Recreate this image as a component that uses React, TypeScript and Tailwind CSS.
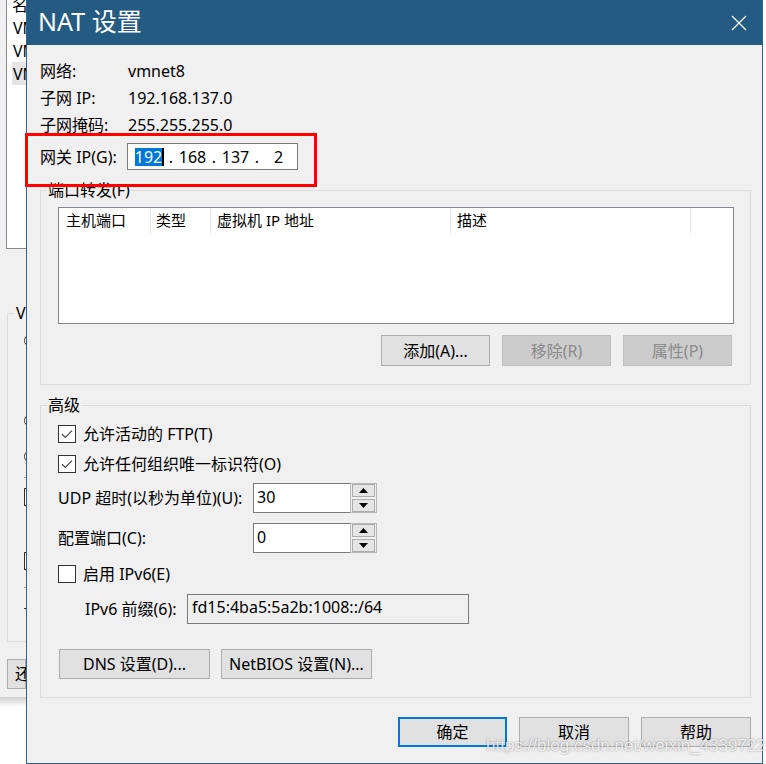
import React from "react";

const FONT = "font-['Noto_Sans','Noto_Sans_CJK_SC',sans-serif]";

type BtnProps = {
  label: string;
  className?: string;
  disabled?: boolean;
  primary?: boolean;
};

const Button = ({ label, className = "", disabled, primary }: BtnProps) => {
  const tone = disabled
    ? "border bg-[#cccccc] border-[#bfbfbf] text-[#8a8a8a]"
    : primary
    ? "border-2 bg-[#e1e1e1] border-[#0078d7] text-black"
    : "border bg-[#e1e1e1] border-[#adadad] text-black";
  return (
    <div
      className={`flex items-center justify-center text-[16px] leading-none ${tone} ${className}`}>
      {label}
    </div>
  );
};

const Check = ({ checked }: { checked?: boolean }) => (
  <div className="w-[18px] h-[18px] shrink-0 border border-[#333333] bg-white flex items-center justify-center">
    {checked && (
      <svg width="12" height="10" viewBox="0 0 12 10">
        <path d="M1 5.2 L4.4 8.4 L11 1.6" fill="none" stroke="#4a4a4a" strokeWidth="1.3" />
      </svg>
    )}
  </div>
);

const Arrow = ({ up }: { up?: boolean }) => (
  <div className="h-[13px] bg-[#e5e5e5] border border-[#acacac] flex items-center justify-center">
    <svg width="9" height="5" viewBox="0 0 9 5">
      <path d={up ? "M0 5 L4.5 0 L9 5Z" : "M0 0 L4.5 5 L9 0Z"} fill="#000" />
    </svg>
  </div>
);

const Spin = ({ value }: { value: string }) => (
  <div className="flex w-[124px] h-[30px] shrink-0">
    <div className="flex-1 bg-white border border-[#7a7a7a] border-r-0 pl-[3px] pb-[3px] flex items-center text-[16px]">
      {value}
    </div>
    <div className="w-[27px] border border-[#b9b9b9] bg-[#f0f0f0] flex flex-col justify-between px-[1px]">
      <Arrow up />
      <Arrow />
    </div>
  </div>
);

// Part of the window that sits behind the dialog
const BackWindow = () => (
  <div className="w-[26px] shrink-0 flex flex-col overflow-hidden text-[16px]">
    <div className="h-[697px] bg-[#f0f0f0] flex flex-col">
      <div className="ml-[6px] h-[249px] bg-white border-l border-b border-[#828790] flex flex-col overflow-hidden">
        <div className="mt-[-7px] h-[23px] pl-[5px] flex items-center whitespace-nowrap">名称</div>
        <div className="h-[23px] pl-[6px] flex items-center whitespace-nowrap">VMnet0</div>
        <div className="h-[23px] pl-[6px] flex items-center whitespace-nowrap">VMnet1</div>
        <div className="h-[23px] ml-[5px] pl-[1px] bg-[#e5e5e5] flex items-center whitespace-nowrap">VMnet8</div>
      </div>
      <fieldset className="ml-[7px] mt-[54px] h-[339px] border border-r-0 border-[#dcdcdc] pl-[16px] flex flex-col">
        <legend className="ml-[-9px] px-[1px] h-[20px] leading-[20px] whitespace-nowrap">VMnet 信息</legend>
        <div className="mt-[11px] w-[13px] h-[13px] rounded-full border border-[#333333] bg-white" />
        <div className="mt-[67px] w-[13px] h-[13px] rounded-full border border-[#333333] bg-white" />
        <div className="mt-[23px] w-[13px] h-[13px] rounded-full border border-[#333333] bg-white" />
        <div className="mt-[14px] h-[1px] w-[10px] bg-[#a0a0a0]" />
        <div className="mt-[10px] w-[18px] h-[18px] border border-[#333333] bg-white" />
        <div className="mt-[46px] w-[18px] h-[18px] border border-[#333333] bg-white" />
        <div className="mt-[17px] h-[1px] w-[10px] bg-[#a0a0a0]" />
        <div className="mt-[20px] h-[1px] w-[4px] bg-[#333333]" />
      </fieldset>
      <div className="ml-[7px] mt-[17px] h-[30px] border border-[#adadad] bg-[#e1e1e1] pl-[7px] flex items-center whitespace-nowrap">
        还原默认设置(R)
      </div>
    </div>
    <div className="h-[10px] bg-linear-to-b from-[#cfcfcf] to-white" />
  </div>
);

const InfoRow = ({ label, value }: { label: string; value: string }) => (
  <div className="h-[27px] flex items-center">
    <div className="w-[88px]">{label}</div>
    <div>{value}</div>
  </div>
);

const Octet = ({ children }: { children: React.ReactNode }) => (
  <div className="w-[35px] flex items-center justify-center">{children}</div>
);

const Dot = () => <div className="w-[8px] text-center">.</div>;

const columns = [
  { title: "主机端口", w: "w-[92px] pl-[7px]" },
  { title: "类型", w: "w-[60px] pl-[5px]" },
  { title: "虚拟机 IP 地址", w: "w-[240px] pl-[6px]" },
  { title: "描述", w: "w-[240px] pl-[6px]" },
];

const Dialog = () => (
  <div className="w-[737px] h-[764px] shrink-0 flex flex-col border-l border-r border-b border-[#2f6391] bg-[#f0f0f0]">
    <div className="h-[45px] shrink-0 bg-[#245b83] flex items-center justify-between pl-[11px] pr-[15px] text-white">
      <div className="text-[25px] leading-none pb-[2px]">NAT 设置</div>
      <svg width="16" height="16" viewBox="0 0 16 16">
        <path d="M1 1 L15 15 M15 1 L1 15" stroke="#ffffff" strokeWidth="1.2" />
      </svg>
    </div>

    <div className="flex flex-col pl-[13px] pr-[11px] pt-[12px] text-[16px] text-black">
      <InfoRow label="网络:" value="vmnet8" />
      <InfoRow label="子网 IP:" value="192.168.137.0" />
      <InfoRow label="子网掩码:" value="255.255.255.0" />

      <div className="mt-[5px] h-[27px] flex items-center">
        <div className="w-[87px]">网关 IP(G):</div>
        <div className="w-[171px] h-[27px] bg-white border border-[#7a7a7a] pl-[4px] flex items-center">
          <Octet>
            <span className="bg-[#0078d7] text-white leading-[18px]">192</span>
            <span className="w-[2px] h-[18px] bg-black" />
          </Octet>
          <Dot />
          <Octet>168</Octet>
          <Dot />
          <Octet>137</Octet>
          <Dot />
          <Octet>2</Octet>
        </div>
      </div>

      <fieldset className="mt-[10px] border border-[#dcdcdc] pl-[17px] pr-[16px] pb-[18px] flex flex-col">
        <legend className="ml-[-11px] px-[1px] h-[20px] leading-[20px]">端口转发(F)</legend>
        <div className="mt-[7px] h-[117px] bg-white border border-[#828790] flex flex-col">
          <div className="h-[25px] flex text-[15px]">
            {columns.map((c) => (
              <div key={c.title} className={`${c.w} h-full border-r border-[#e5e5e5] flex items-center`}>
                {c.title}
              </div>
            ))}
          </div>
        </div>
        <div className="mt-[11px] mr-[2px] flex justify-end gap-[12px]">
          <Button label="添加(A)..." className="w-[109px] h-[31px]" />
          <Button label="移除(R)" className="w-[109px] h-[31px]" disabled />
          <Button label="属性(P)" className="w-[109px] h-[31px]" disabled />
        </div>
      </fieldset>

      <fieldset className="mt-[10px] border border-[#dcdcdc] pl-[17px] pr-[16px] pb-[18px] flex flex-col">
        <legend className="ml-[-11px] px-[1px] h-[20px] leading-[20px]">高级</legend>
        <div className="mt-[8px] h-[22px] flex items-center gap-[7px]">
          <Check checked />
          <span>允许活动的 FTP(T)</span>
        </div>
        <div className="mt-[8px] h-[22px] flex items-center gap-[7px]">
          <Check checked />
          <span>允许任何组织唯一标识符(O)</span>
        </div>
        <div className="mt-[8px] flex items-center">
          <div className="w-[195px]">UDP 超时(以秒为单位)(U):</div>
          <Spin value="30" />
        </div>
        <div className="mt-[10px] flex items-center">
          <div className="w-[195px]">配置端口(C):</div>
          <Spin value="0" />
        </div>
        <div className="mt-[10px] h-[22px] flex items-center gap-[7px]">
          <Check />
          <span>启用 IPv6(E)</span>
        </div>
        <div className="mt-[9px] flex items-center pl-[27px]">
          <div className="w-[102px]">IPv6 前缀(6):</div>
          <div className="w-[282px] h-[30px] border border-[#7a7a7a] bg-[#f0f0f0] pl-[4px] pb-[4px] flex items-center">
            fd15:4ba5:5a2b:1008::/64
          </div>
        </div>
        <div className="mt-[25px] ml-[1px] flex gap-[11px]">
          <Button label="DNS 设置(D)..." className="w-[151px] h-[30px]" />
          <Button label="NetBIOS 设置(N)..." className="w-[151px] h-[30px]" />
        </div>
      </fieldset>

      <div className="mt-[19px] flex justify-end gap-[12px]">
        <Button label="确定" className="w-[109px] h-[30px]" primary />
        <Button label="取消" className="w-[110px] h-[30px]" />
        <Button label="帮助" className="w-[110px] h-[30px]" />
      </div>
    </div>
  </div>
);

export default function App() {
  return (
    <div className={`relative w-[766px] h-[764px] flex bg-white overflow-hidden ${FONT}`}>
      <BackWindow />
      <Dialog />

      {/* red annotation box around the gateway row */}
      <div className="absolute left-[25px] top-[133px] w-[292px] h-[54px] border-[3px] border-[#ff0000]" />

      {/* blog watermark */}
      <div className="absolute left-[486px] top-[733px] font-['Liberation_Sans',sans-serif] text-[17px] text-white/80 [text-shadow:0_0_2px_rgba(0,0,0,0.45)] whitespace-nowrap">
        https://blog.csdn.net/weixin_43397221
      </div>
    </div>
  );
}
